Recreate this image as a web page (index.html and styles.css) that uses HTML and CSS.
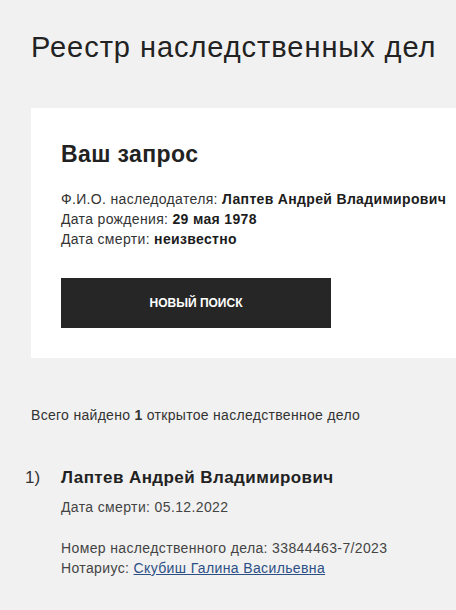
FILE: index.html
```html
<!DOCTYPE html>
<html lang="ru">
<head>
<meta charset="utf-8">
<title>Реестр наследственных дел</title>
<link rel="stylesheet" href="styles.css">
</head>
<body>
<main class="page">
  <h1 class="title">Реестр наследственных дел</h1>
  <section class="card">
    <h2 class="card-title">Ваш запрос</h2>
    <div class="query">
      <div>Ф.И.О. наследодателя: <b>Лаптев Андрей Владимирович</b></div>
      <div>Дата рождения: <b>29 мая 1978</b></div>
      <div>Дата смерти: <b>неизвестно</b></div>
    </div>
    <button class="btn" type="button">НОВЫЙ ПОИСК</button>
  </section>
  <p class="summary">Всего найдено <b>1</b> открытое наследственное дело</p>
  <ol class="results">
    <li class="result">
      <span class="num">1)</span>
      <div class="result-body">
        <div class="result-name">Лаптев Андрей Владимирович</div>
        <div class="result-line">Дата смерти: 05.12.2022</div>
        <div class="result-meta">
          <div>Номер наследственного дела: 33844463-7/2023</div>
          <div>Нотариус: <a href="#" class="link">Скубиш Галина Васильевна</a></div>
        </div>
      </div>
    </li>
  </ol>
</main>
</body>
</html>
```
FILE: styles.css
```css
html, body {
  margin: 0;
  padding: 0;
  background: #f1f1f1;
}
body {
  font-family: "Liberation Sans", Arial, sans-serif;
  color: #222;
  overflow: hidden;
}
.page {
  padding: 29px 0 0 31px;
}
.title {
  margin: 0;
  font-size: 29px;
  font-weight: normal;
  line-height: 36px;
  color: #222;
  letter-spacing: 0.95px;
  white-space: nowrap;
}
.card {
  margin-top: 43px;
  background: #fff;
  padding: 33px 0 29px 30px;
  height: 250px;
  box-sizing: border-box;
}
.card-title {
  margin: 0;
  font-size: 23px;
  line-height: 26px;
  font-weight: bold;
  color: #222;
  letter-spacing: 0.4px;
}
.query {
  margin-top: 22px;
  font-size: 14px;
  line-height: 20px;
  color: #333;
  letter-spacing: 0.33px;
  white-space: nowrap;
}
.query b {
  color: #1c1c1c;
}
.btn {
  display: flex;
  align-items: center;
  justify-content: center;
  margin-top: 29px;
  width: 270px;
  height: 50px;
  border: 0;
  background: #262626;
  color: #fff;
  font-family: "Liberation Sans", Arial, sans-serif;
  font-weight: bold;
  font-size: 12px;
  padding: 0 0 1px 0;
}
.summary {
  margin: 47px 0 0 0;
  font-size: 14px;
  line-height: 20px;
  color: #333;
  letter-spacing: 0.3px;
}
.results {
  list-style: none;
  margin: 41px 0 0 -6px;
  padding: 0;
}
.result {
  display: flex;
}
.num {
  width: 36px;
  font-size: 17px;
  line-height: 24px;
  color: #333;
}
.result-name {
  font-size: 17px;
  line-height: 24px;
  font-weight: bold;
  color: #222;
  letter-spacing: 0.42px;
}
.result-line, .result-meta {
  font-size: 14px;
  line-height: 20px;
  color: #444;
  letter-spacing: 0.37px;
}
.result-line {
  margin-top: 7px;
}
.result-meta {
  margin-top: 21px;
}
.link {
  color: #2c4f86;
  text-decoration: underline;
}
```
